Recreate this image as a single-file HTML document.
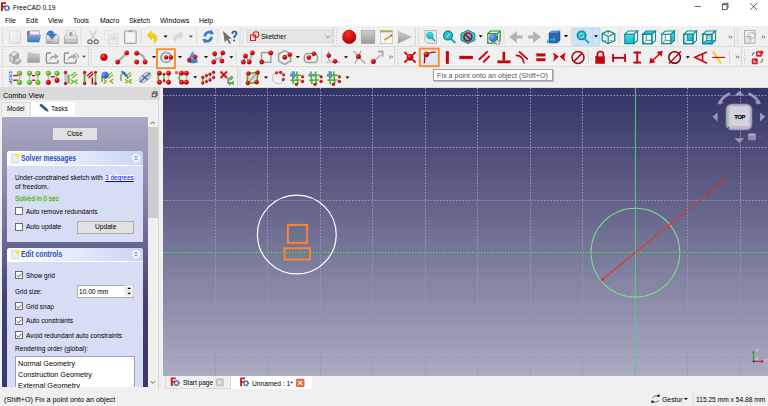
<!DOCTYPE html><html><head><meta charset="utf-8"><style>
html,body{margin:0;padding:0;width:768px;height:406px;overflow:hidden;background:#f0f0f0;position:relative}
.t{position:absolute;font-family:"Liberation Sans",sans-serif;line-height:1;white-space:nowrap;transform-origin:0 0}
.b{position:absolute}
</style></head><body>
<div class="b" style="left:0px;top:0px;width:768px;height:26px;background:#fff"></div>
<div class="b" style="left:0px;top:26px;width:768px;height:62px;background:#f0f0f0"></div>
<div class="b" style="left:0px;top:46px;width:768px;height:1px;background:#dcdcdc"></div>
<div class="b" style="left:0px;top:66px;width:768px;height:1px;background:#dcdcdc"></div>
<div class="b" style="left:0px;top:87px;width:768px;height:1px;background:#dcdcdc"></div>
<svg class="b" style="left:0;top:0" width="768" height="88" viewBox="0 0 768 88"><defs>
<radialGradient id="rg" cx="0.35" cy="0.3" r="0.75"><stop offset="0" stop-color="#ff6060"/><stop offset="0.5" stop-color="#e00000"/><stop offset="1" stop-color="#a00000"/></radialGradient>
<radialGradient id="gg" cx="0.35" cy="0.3" r="0.75"><stop offset="0" stop-color="#a8f070"/><stop offset="0.6" stop-color="#60c020"/><stop offset="1" stop-color="#3a9010"/></radialGradient>
<radialGradient id="bg" cx="0.35" cy="0.3" r="0.75"><stop offset="0" stop-color="#7ab0f0"/><stop offset="1" stop-color="#1a5fb0"/></radialGradient>
<linearGradient id="gry" x1="0" y1="0" x2="0" y2="1"><stop offset="0" stop-color="#cfcfcf"/><stop offset="1" stop-color="#9c9c9c"/></linearGradient>
<linearGradient id="wht" x1="0" y1="0" x2="1" y2="1"><stop offset="0" stop-color="#fafafa"/><stop offset="1" stop-color="#e2e2e2"/></linearGradient>
<linearGradient id="blu" x1="0" y1="0" x2="0" y2="1"><stop offset="0" stop-color="#78a8e0"/><stop offset="1" stop-color="#3c74c0"/></linearGradient>
<linearGradient id="cy" x1="0" y1="0" x2="0" y2="1"><stop offset="0" stop-color="#40e0e8"/><stop offset="1" stop-color="#10b8c8"/></linearGradient>
</defs><line x1="240" y1="27" x2="240" y2="46" stroke="#d6d6d6" stroke-width="1" /><line x1="333.6" y1="27" x2="333.6" y2="46" stroke="#d6d6d6" stroke-width="1" /><line x1="415.3" y1="27" x2="415.3" y2="46" stroke="#d6d6d6" stroke-width="1" /><line x1="734.5" y1="27" x2="734.5" y2="46" stroke="#d6d6d6" stroke-width="1" /><line x1="88.4" y1="47" x2="88.4" y2="66" stroke="#d6d6d6" stroke-width="1" /><line x1="394.6" y1="47" x2="394.6" y2="66" stroke="#d6d6d6" stroke-width="1" /><line x1="741.4" y1="47" x2="741.4" y2="66" stroke="#d6d6d6" stroke-width="1" /><line x1="237.6" y1="67" x2="237.6" y2="87" stroke="#d6d6d6" stroke-width="1" /><line x1="2.5" y1="29" x2="2.5" y2="44.5" stroke="#a8a8a8" stroke-width="0.8" stroke-dasharray="0.9 1.9"/><line x1="243" y1="29" x2="243" y2="44.5" stroke="#a8a8a8" stroke-width="0.8" stroke-dasharray="0.9 1.9"/><line x1="336.75" y1="29" x2="336.75" y2="44.5" stroke="#a8a8a8" stroke-width="0.8" stroke-dasharray="0.9 1.9"/><line x1="418.4" y1="29" x2="418.4" y2="44.5" stroke="#a8a8a8" stroke-width="0.8" stroke-dasharray="0.9 1.9"/><line x1="737.6" y1="29" x2="737.6" y2="44.5" stroke="#a8a8a8" stroke-width="0.8" stroke-dasharray="0.9 1.9"/><line x1="2.5" y1="49.5" x2="2.5" y2="64.5" stroke="#a8a8a8" stroke-width="0.8" stroke-dasharray="0.9 1.9"/><line x1="91" y1="49.5" x2="91" y2="64.5" stroke="#a8a8a8" stroke-width="0.8" stroke-dasharray="0.9 1.9"/><line x1="397.75" y1="49.5" x2="397.75" y2="64.5" stroke="#a8a8a8" stroke-width="0.8" stroke-dasharray="0.9 1.9"/><line x1="744.5" y1="49.5" x2="744.5" y2="64.5" stroke="#a8a8a8" stroke-width="0.8" stroke-dasharray="0.9 1.9"/><line x1="2.5" y1="70" x2="2.5" y2="85.5" stroke="#a8a8a8" stroke-width="0.8" stroke-dasharray="0.9 1.9"/><line x1="240" y1="70" x2="240" y2="85.5" stroke="#a8a8a8" stroke-width="0.8" stroke-dasharray="0.9 1.9"/><line x1="81" y1="29" x2="81" y2="44" stroke="#d4d4d4" stroke-width="0.8" /><line x1="141" y1="29" x2="141" y2="44" stroke="#d4d4d4" stroke-width="0.8" /><line x1="196.75" y1="29" x2="196.75" y2="44" stroke="#d4d4d4" stroke-width="0.8" /><line x1="218" y1="29" x2="218" y2="44" stroke="#d4d4d4" stroke-width="0.8" /><line x1="504" y1="29" x2="504" y2="44" stroke="#d4d4d4" stroke-width="0.8" /><line x1="571.4" y1="29" x2="571.4" y2="44" stroke="#d4d4d4" stroke-width="0.8" /><line x1="619" y1="29" x2="619" y2="44" stroke="#d4d4d4" stroke-width="0.8" /><line x1="677.6" y1="29" x2="677.6" y2="44" stroke="#d4d4d4" stroke-width="0.8" /><line x1="236.4" y1="50" x2="236.4" y2="64" stroke="#d4d4d4" stroke-width="0.8" /><line x1="321.8" y1="50" x2="321.8" y2="64" stroke="#d4d4d4" stroke-width="0.8" /><line x1="588.5" y1="50" x2="588.5" y2="64" stroke="#d4d4d4" stroke-width="0.8" /><line x1="729.5" y1="50" x2="729.5" y2="64" stroke="#d4d4d4" stroke-width="0.8" /><rect x="9.6" y="30.8" width="10.9" height="12.6" fill="url(#wht)" stroke="#cfcfcf" stroke-width="0.7" rx="1"/><rect x="17.6" y="31.4" width="2.4" height="2.4" fill="#fff" stroke="#d8d8d8" stroke-width="0.5" /><path d="M27.2 31 L30 31 L30 30.6 L39.6 30.6 L39.6 35 L27.2 35 Z" fill="#8c8c8c" stroke="none" stroke-width="1" /><rect x="30" y="31.2" width="9" height="3.4" fill="#f4f4f4" stroke="none" stroke-width="0" /><path d="M27.2 31 L29 31 L29 42 L27.2 42 Z" fill="#7a7a7a" stroke="none" stroke-width="1" /><polygon points="28.2,35 41,35 39.3,42.2 28,42.2" fill="url(#blu)" stroke="none" stroke-width="0" /><linearGradient id="tray" x1="0" y1="0" x2="0" y2="1"><stop offset="0" stop-color="#eeeeee"/><stop offset="0.6" stop-color="#d6d6d6"/><stop offset="1" stop-color="#b0b0b0"/></linearGradient><path d="M46.2 36.6 L47.8 34.4 L57.2 34.4 L58.8 36.6 L58.8 43.4 L46.2 43.4 Z" fill="url(#tray)" stroke="#979797" stroke-width="0.7" /><rect x="47" y="39.2" width="11" height="1" fill="#c4c4c4" stroke="none" stroke-width="0" /><rect x="47.4" y="41.4" width="4" height="0.8" fill="#8a8a8a" stroke="none" stroke-width="0" /><path d="M46.6 35 C46.8 31 50.6 29.6 53.6 32 L53.6 34 L56.4 34 L52 39.2 L47.6 34 L50.6 34 C50 32.8 48.2 32.8 46.6 35 Z" fill="#3a78c8" stroke="#2a5aa0" stroke-width="0.3" /><path d="M64.4 36.6 L66 34.4 L75.6 34.4 L77.2 36.6 L77.2 43.4 L64.4 43.4 Z" fill="url(#tray)" stroke="#979797" stroke-width="0.7" /><rect x="65.2" y="39.2" width="11.2" height="1" fill="#c4c4c4" stroke="none" stroke-width="0" /><rect x="66.6" y="30.8" width="8.8" height="5" fill="#f2f2f2" stroke="#b4b4b4" stroke-width="0.5" /><polygon points="69.6,32 72.2,32 72.2,33.6 73.6,33.6 70.9,36.4 68.2,33.6 69.6,33.6" fill="#a4a4a4" stroke="none" stroke-width="0" /><line x1="89.5" y1="30.5" x2="95.5" y2="40" stroke="#c8c8c8" stroke-width="1.3" /><line x1="96.5" y1="30.5" x2="90.5" y2="40" stroke="#c8c8c8" stroke-width="1.3" /><ellipse cx="90" cy="41.8" rx="2.2" ry="1.9" fill="none" stroke="#6e6e6e" stroke-width="1.2"/><ellipse cx="96.2" cy="41.8" rx="2.2" ry="1.9" fill="none" stroke="#6e6e6e" stroke-width="1.2"/><rect x="104.5" y="30.5" width="9" height="9.5" fill="#f2f2f2" stroke="#dadada" stroke-width="0.6" /><rect x="108.5" y="34" width="9.5" height="10" fill="#ececec" stroke="#d6d6d6" stroke-width="0.7" /><rect x="110.5" y="36" width="5.5" height="4" fill="#dedede" stroke="none" stroke-width="0" /><rect x="124.6" y="31" width="11.6" height="12.4" fill="#ececec" stroke="#a6a6a6" stroke-width="1.1" rx="0.6"/><rect x="128.5" y="30.2" width="3.8" height="1.8" fill="#a0a0a0" stroke="none" stroke-width="0" /><rect x="126.2" y="33" width="8.4" height="9" fill="#f6f6f6" stroke="none" stroke-width="0" /><path d="M147 35.5 L151.5 31 L151.5 33.4 C155.5 33.5 157.6 36.5 156.8 40 C156.3 41.6 155 42.6 153.8 42.8 C155 40.5 154.2 37.6 151.5 37.6 L151.5 40 Z" fill="#f0d010" stroke="#d8b800" stroke-width="0.4" /><polygon points="163.6,35.5 167.6,35.5 165.6,37.8" fill="#000" stroke="none" stroke-width="0" /><path d="M183.5 35.5 L179 31 L179 33.4 C175 33.5 172.9 36.5 173.7 40 C174.2 41.6 175.5 42.6 176.7 42.8 C175.5 40.5 176.3 37.6 179 37.6 L179 40 Z" fill="#d8d8d8" stroke="none" stroke-width="1" /><polygon points="188.9,35.4 192.9,35.4 190.9,37.699999999999996" fill="#555" stroke="none" stroke-width="0" /><path d="M203.5 36.5 C203.5 32.5 207 30.2 210.5 30.8 L211.5 29.8 L214 34 L209.5 34.6 L210.3 33.4 C208 33 206.2 34.6 206.3 36.5 Z" fill="#3a78c8" stroke="none" stroke-width="1" /><path d="M212.8 36.8 C212.8 40.8 209.3 43.1 205.8 42.5 L204.8 43.5 L202.3 39.3 L206.8 38.7 L206 39.9 C208.3 40.3 210.1 38.7 210 36.8 Z" fill="#3a78c8" stroke="none" stroke-width="1" /><polygon points="223,31 231.6,38.4 228.5,39 231,43.2 229.4,44 227,39.8 224.8,42.4" fill="#6e6e6e" stroke="none" stroke-width="0" /><path d="M231.4 34 C231.4 31.5 233.2 30.6 234.6 30.6 C236.2 30.6 237.4 31.8 237.4 33.4 C237.4 35.4 235.2 36 235 38 L233.2 38 C233.2 35.4 235.4 35 235.4 33.6 C235.4 32.6 235 32.2 234.5 32.2 C233.8 32.2 233.3 32.8 233.3 34 Z" fill="#2e5fa8" stroke="none" stroke-width="1" /><rect x="233.2" y="39.6" width="1.8" height="1.8" fill="#2e5fa8" stroke="none" stroke-width="0" /><rect x="247" y="30" width="86" height="12.6" fill="#e5e5e5" stroke="#d2d2d2" stroke-width="0.8" /><path d="M250.5 35 L255.5 35 L255.5 40.5 L250.5 40.5 Z" fill="none" stroke="#d82020" stroke-width="1.1" /><circle cx="256" cy="34.6" r="2.8" fill="none" stroke="#d82020" stroke-width="1.1"/><path d="M325.6 35.6 L327.8 37.8 L330 35.6" fill="none" stroke="#606060" stroke-width="0.7" /><radialGradient id="rg2" cx="0.4" cy="0.3" r="0.8"><stop offset="0" stop-color="#f03030"/><stop offset="0.6" stop-color="#d00a0a"/><stop offset="1" stop-color="#980000"/></radialGradient><circle cx="349.2" cy="36.9" r="6.8" fill="url(#rg2)" stroke="#a00000" stroke-width="0.4"/><rect x="361.2" y="30.3" width="13.6" height="13.3" fill="url(#gry)" stroke="#8e8e8e" stroke-width="0.5" /><rect x="380.4" y="30.5" width="12" height="12.8" fill="#f4f4f4" stroke="#b8b8b8" stroke-width="0.6" /><rect x="380.4" y="30.5" width="12" height="1.8" fill="#b8a83a" stroke="none" stroke-width="0" /><line x1="384.3" y1="40" x2="391.3" y2="35.5" stroke="#d09a30" stroke-width="1.6" /><line x1="391" y1="35.6" x2="392.2" y2="34.8" stroke="#e02020" stroke-width="1.6" /><polygon points="398,30.6 412,37 398,43.4" fill="url(#gry)" stroke="none" stroke-width="0" /><path d="M425 30.6 L436.4 30.6 L436.4 43.4 L427 43.4 L425 41.4 Z" fill="#f2f2f2" stroke="#9a9a9a" stroke-width="0.7" /><rect x="427" y="39" width="9" height="3.8" fill="#e4e4e4" stroke="none" stroke-width="0" /><circle cx="430" cy="35.6" r="3.4" fill="url(#cy)" stroke="#108a98" stroke-width="0.5"/><line x1="432" y1="38" x2="435" y2="41" stroke="#10a0b0" stroke-width="1.6" /><circle cx="448" cy="35.6" r="4.4" fill="#20c0cc" stroke="#10808c" stroke-width="1.2"/><line x1="451.2" y1="39" x2="455.4" y2="43" stroke="#10a8b8" stroke-width="1.8" /><line x1="446" y1="37.8" x2="450" y2="33.6" stroke="#ffffff" stroke-width="0.8" /><polygon points="467.9,30.2 474.8,33.6 474.8,40.2 467.9,43.6 461,40.2 461,33.6" fill="url(#cy)" stroke="#0c8088" stroke-width="1" /><circle cx="467.9" cy="36.9" r="3.9" fill="none" stroke="#c00010" stroke-width="1.6"/><line x1="465.2" y1="34.2" x2="470.6" y2="39.6" stroke="#c00010" stroke-width="1.6" /><polygon points="478.7,35.2 482.7,35.2 480.7,37.5" fill="#000" stroke="none" stroke-width="0" /><polygon points="487.8,33.6 490.6,31 500.2,31 500.2,40.6 497.4,43.2 487.8,43.2" fill="none" stroke="#1e9a1e" stroke-width="1.2" /><line x1="487.8" y1="33.6" x2="497.4" y2="33.6" stroke="#1e9a1e" stroke-width="1.1" /><line x1="497.4" y1="33.6" x2="500.2" y2="31" stroke="#1e9a1e" stroke-width="1.1" /><line x1="497.4" y1="33.6" x2="497.4" y2="43.2" stroke="#1e9a1e" stroke-width="1.1" /><circle cx="493.2" cy="37.8" r="4.3" fill="url(#bg)"/><polygon points="495.8,39.4 500.6,43 498.6,43.4 500,45 499,45.4 497.6,43.8 496.4,45" fill="#f4f4f4" stroke="#666" stroke-width="0.4" /><polygon points="509,37 517,31 517,35.4 522.7,35.4 522.7,38.6 517,38.6 517,43" fill="#b4b4b4" stroke="none" stroke-width="0" /><polygon points="541,37 533,31 533,35.4 528,35.4 528,38.6 533,38.6 533,43" fill="#b4b4b4" stroke="none" stroke-width="0" /><polygon points="549,33 552,31 560,31 560,40.5 557,43 549,43" fill="#2e64b0" stroke="#1c4c90" stroke-width="0.5" /><polygon points="549,33 552,31 560,31 557,33" fill="#5a90d8" stroke="none" stroke-width="0" /><path d="M546.5 42.8 C546.8 39.5 549 38.2 553 38.4 L553 36.6 L556 39.4 L553 42 L553 40.4 C550 40.2 548.5 41 547.6 43.6 Z" fill="#18b0c0" stroke="none" stroke-width="1" /><polygon points="564,35.1 568,35.1 566,37.4" fill="#000" stroke="none" stroke-width="0" /><rect x="573" y="28.2" width="26.8" height="17.2" fill="#cce4f7" stroke="#a8d2f4" stroke-width="0.6" /><line x1="592.6" y1="28.6" x2="592.6" y2="45" stroke="#b2d6f2" stroke-width="0.8" /><circle cx="581.6" cy="35.4" r="4.4" fill="#20b8c4" stroke="#108090" stroke-width="1.1"/><line x1="584.6" y1="38.6" x2="589" y2="43" stroke="#10a8b8" stroke-width="1.8" /><path d="M579.6 35.4 A2 2 0 0 1 583.4 34.4 M583.6 35.6 A2 2 0 0 1 579.8 36.6" fill="none" stroke="#e0f4f4" stroke-width="0.8" /><polygon points="594,35.2 598,35.2 596,37.5" fill="#000" stroke="none" stroke-width="0" /><polygon points="602.2,33.6 608.2,30.6 614.7,33.6 614.7,40.6 608.2,43.6 602.2,40.6" fill="none" stroke="#128a90" stroke-width="1.3" /><line x1="602.2" y1="33.6" x2="608.2" y2="36.6" stroke="#128a90" stroke-width="1.1" /><line x1="614.7" y1="33.6" x2="608.2" y2="36.6" stroke="#128a90" stroke-width="1.1" /><line x1="608.2" y1="36.6" x2="608.2" y2="43.6" stroke="#128a90" stroke-width="1.1" /><line x1="608.2" y1="30.6" x2="608.2" y2="33.6" stroke="#128a90" stroke-width="0.8" /><line x1="604.7" y1="40.6" x2="606.2" y2="40.6" stroke="#128a90" stroke-width="1" /><line x1="610.2" y1="40.6" x2="611.7" y2="40.6" stroke="#128a90" stroke-width="1" /><polygon points="624.8,34.2 628.3,31.0 637.5,31.0 634,34.2" fill="#f6f6f6" stroke="#128a90" stroke-width="1.1" /><polygon points="634,34.2 637.5,31.0 637.5,40.400000000000006 634,43.6" fill="#f6f6f6" stroke="#128a90" stroke-width="1.1" /><polygon points="624.8,34.2 634,34.2 634,43.6 624.8,43.6" fill="url(#cy)" stroke="#128a90" stroke-width="1.1" /><polygon points="642.8,34.2 652,34.2 652,43.6 642.8,43.6" fill="#f6f6f6" stroke="#128a90" stroke-width="1.1" /><line x1="646.3" y1="31.0" x2="646.3" y2="40.400000000000006" stroke="#128a90" stroke-width="0.8" /><line x1="646.3" y1="40.400000000000006" x2="655.5" y2="40.400000000000006" stroke="#128a90" stroke-width="0.8" /><line x1="642.8" y1="43.6" x2="646.3" y2="40.400000000000006" stroke="#128a90" stroke-width="0.8" /><polygon points="642.8,34.2 646.3,31.0 655.5,31.0 652,34.2" fill="url(#cy)" stroke="#128a90" stroke-width="1.1" /><polygon points="652,34.2 655.5,31.0 655.5,40.400000000000006 652,43.6" fill="#f6f6f6" stroke="#128a90" stroke-width="1.1" /><polygon points="642.8,34.2 652,34.2 652,43.6 642.8,43.6" fill="none" stroke="#128a90" stroke-width="1.1" /><polygon points="661.8,34.2 671,34.2 671,43.6 661.8,43.6" fill="#f6f6f6" stroke="#128a90" stroke-width="1.1" /><line x1="665.3" y1="31.0" x2="665.3" y2="40.400000000000006" stroke="#128a90" stroke-width="0.8" /><line x1="665.3" y1="40.400000000000006" x2="674.5" y2="40.400000000000006" stroke="#128a90" stroke-width="0.8" /><line x1="661.8" y1="43.6" x2="665.3" y2="40.400000000000006" stroke="#128a90" stroke-width="0.8" /><polygon points="661.8,34.2 665.3,31.0 674.5,31.0 671,34.2" fill="#f6f6f6" stroke="#128a90" stroke-width="1.1" /><polygon points="671,34.2 674.5,31.0 674.5,40.400000000000006 671,43.6" fill="url(#cy)" stroke="#128a90" stroke-width="1.1" /><polygon points="683.8,34.2 693,34.2 693,43.6 683.8,43.6" fill="#f6f6f6" stroke="#128a90" stroke-width="1.1" /><line x1="687.3" y1="31.0" x2="687.3" y2="40.400000000000006" stroke="#128a90" stroke-width="0.8" /><line x1="687.3" y1="40.400000000000006" x2="696.5" y2="40.400000000000006" stroke="#128a90" stroke-width="0.8" /><line x1="683.8" y1="43.6" x2="687.3" y2="40.400000000000006" stroke="#128a90" stroke-width="0.8" /><polygon points="683.8,34.2 687.3,31.0 696.5,31.0 693,34.2" fill="#f6f6f6" stroke="#128a90" stroke-width="1.1" /><polygon points="693,34.2 696.5,31.0 696.5,40.400000000000006 693,43.6" fill="#f6f6f6" stroke="#128a90" stroke-width="1.1" /><rect x="687.3" y="34.2" width="5.7" height="6.2" fill="url(#cy)" stroke="#128a90" stroke-width="0.7" /><polygon points="683.8,34.2 693,34.2 693,43.6 683.8,43.6" fill="none" stroke="#128a90" stroke-width="1.1" /><polygon points="702.8,34.2 712,34.2 712,43.6 702.8,43.6" fill="#f6f6f6" stroke="#128a90" stroke-width="1.1" /><line x1="706.3" y1="31.0" x2="706.3" y2="40.400000000000006" stroke="#128a90" stroke-width="0.8" /><line x1="706.3" y1="40.400000000000006" x2="715.5" y2="40.400000000000006" stroke="#128a90" stroke-width="0.8" /><line x1="702.8" y1="43.6" x2="706.3" y2="40.400000000000006" stroke="#128a90" stroke-width="0.8" /><polygon points="702.8,34.2 706.3,31.0 715.5,31.0 712,34.2" fill="#f6f6f6" stroke="#128a90" stroke-width="1.1" /><polygon points="712,34.2 715.5,31.0 715.5,40.400000000000006 712,43.6" fill="#f6f6f6" stroke="#128a90" stroke-width="1.1" /><polygon points="702.8,43.6 706.3,40.400000000000006 715.5,40.400000000000006 712,43.6" fill="url(#cy)" stroke="#128a90" stroke-width="0.9" /><rect x="707.4" y="35.6" width="2.6" height="2.6" fill="#f6f6f6" stroke="#128a90" stroke-width="0.6" /><polygon points="702.8,34.2 712,34.2 712,43.6 702.8,43.6" fill="none" stroke="#128a90" stroke-width="1.1" /><path d="M728.9 35.7 L730.2 37.0 L728.9 38.3 M730.9 35.7 L732.2 37.0 L730.9 38.3" fill="none" stroke="#444" stroke-width="0.7"/><rect x="744.5" y="30.6" width="10.6" height="12.6" fill="#f0f0f0" stroke="#a0a0a0" stroke-width="0.8" /><rect x="744.5" y="36.5" width="6.5" height="6.7" fill="#e0e0e0" stroke="#a8a8a8" stroke-width="0.6" /><circle cx="751.6" cy="35.6" r="3.3" fill="none" stroke="#a0a0a0" stroke-width="0.8"/><path d="M761.9 35.7 L763.2 37.0 L761.9 38.3 M763.9 35.7 L765.2 37.0 L763.9 38.3" fill="none" stroke="#444" stroke-width="0.7"/><polygon points="9.8,54.6 14.4,51.4 18.4,53.8 13.8,57" fill="#e4e4e4" stroke="#8c8c8c" stroke-width="0.7" /><polygon points="9.8,54.6 13.8,57 13.8,63.6 9.8,61.2" fill="#cfcfcf" stroke="#8c8c8c" stroke-width="0.7" /><polygon points="13.8,57 18.4,53.8 18.4,57.4 13.8,60.6" fill="#b4b4b4" stroke="#8c8c8c" stroke-width="0.7" /><polygon points="13.8,60.6 17.4,58.2 20.8,60.2 17.2,62.6" fill="#e4e4e4" stroke="#8c8c8c" stroke-width="0.7" /><polygon points="13.8,60.6 17.2,62.6 17.2,64.2 13.8,63.6" fill="#cfcfcf" stroke="#8c8c8c" stroke-width="0.6" /><polygon points="17.2,62.6 20.8,60.2 20.8,61.8 17.2,64.2" fill="#b4b4b4" stroke="#8c8c8c" stroke-width="0.6" /><line x1="10.4" y1="57.6" x2="13.4" y2="59.4" stroke="#f4f4f4" stroke-width="0.6" /><path d="M27.4 52.2 L32 52.2 L33.4 53.6 L39.8 53.6 L39.8 62.8 L27.4 62.8 Z" fill="url(#gry)" stroke="none" stroke-width="1" /><path d="M51 53 L47.5 53 Q46.4 53 46.4 54 L46.4 62 Q46.4 63.2 47.5 63.2 L57 63.2 Q58 63.2 58 62 L58 60" fill="none" stroke="#8a8a8a" stroke-width="1.3" /><path d="M49.5 61 C49.5 57 51.5 55.5 55 55.5 L55 53.4 L58.8 56.6 L55 59.6 L55 57.6 C52.6 57.6 50.6 58.6 49.5 61 Z" fill="#a8a8a8" stroke="none" stroke-width="1" /><path d="M69 53 L65.5 53 Q64.4 53 64.4 54 L64.4 62 Q64.4 63.2 65.5 63.2 L75 63.2 Q76 63.2 76 62 L76 60" fill="none" stroke="#8a8a8a" stroke-width="1.3" /><path d="M67.5 61 C67.5 57 69.5 55.5 73 55.5 L73 53.4 L76.8 56.6 L73 59.6 L73 57.6 C70.6 57.6 68.6 58.6 67.5 61 Z" fill="#a8a8a8" stroke="none" stroke-width="1" /><path d="M75.5 53 L78.6 56.6 L75.5 60" fill="none" stroke="#a8a8a8" stroke-width="1.1" /><polygon points="82,55.8 86,55.8 84,58.099999999999994" fill="#555" stroke="none" stroke-width="0" /><circle cx="103.9" cy="57.25" r="3.4" fill="url(#rg)" stroke="#a00000" stroke-width="0.4"/><line x1="117.7" y1="62" x2="126.75" y2="52.9" stroke="#9a9a9a" stroke-width="1.9" /><line x1="117.7" y1="62" x2="126.75" y2="52.9" stroke="#e8e8e8" stroke-width="0.855" stroke-dasharray="0.6 0.6"/><circle cx="117.7" cy="62" r="2.2" fill="url(#rg)" stroke="#a00000" stroke-width="0.4"/><circle cx="126.75" cy="52.9" r="2.2" fill="url(#rg)" stroke="#a00000" stroke-width="0.4"/><path d="M137 53.2 Q144.6 54 145.1 62" fill="none" stroke="#9a9a9a" stroke-width="1.9" /><path d="M137 53.2 Q144.6 54 145.1 62" fill="none" stroke="#e8e8e8" stroke-width="0.6" stroke-dasharray="0.6 0.6"/><circle cx="136.7" cy="53.2" r="2.2" fill="url(#rg)" stroke="#a00000" stroke-width="0.4"/><circle cx="136.7" cy="62" r="2.2" fill="url(#rg)" stroke="#a00000" stroke-width="0.4"/><circle cx="145.1" cy="62" r="2.2" fill="url(#rg)" stroke="#a00000" stroke-width="0.4"/><polygon points="152,56 156,56 154,58.3" fill="#000" stroke="none" stroke-width="0" /><rect x="156.9" y="49.2" width="18" height="18.9" fill="#e8f2fa" stroke="#ff8a24" stroke-width="1.9" /><circle cx="166" cy="57.4" r="4.9" fill="none" stroke="#989898" stroke-width="2"/><circle cx="166" cy="57.4" r="4.9" fill="none" stroke="#e6e6e6" stroke-width="0.6" stroke-dasharray="0.6 0.6"/><circle cx="166.2" cy="57.4" r="2" fill="url(#rg)" stroke="#a00000" stroke-width="0.4"/><circle cx="171" cy="57.4" r="2" fill="url(#rg)" stroke="#a00000" stroke-width="0.4"/><polygon points="178,56 182,56 180,58.3" fill="#000" stroke="none" stroke-width="0" /><path d="M192.6 51 C191 53 187.8 60 187.6 62.2 Q192.5 64.4 197.8 62.2 C197 59 194.5 53 192.6 51 Z" fill="url(#blu)" stroke="none" stroke-width="1" /><line x1="189.2" y1="59.8" x2="195.4" y2="56.8" stroke="#c8c8c8" stroke-width="0.8" /><circle cx="189.2" cy="59.8" r="1.9" fill="url(#rg)" stroke="#a00000" stroke-width="0.4"/><circle cx="195.4" cy="56.8" r="1.9" fill="url(#rg)" stroke="#a00000" stroke-width="0.4"/><polygon points="204,56 208,56 206,58.3" fill="#000" stroke="none" stroke-width="0" /><line x1="214.7" y1="53.8" x2="216" y2="58.5" stroke="#9a9a9a" stroke-width="1.2" /><line x1="214.7" y1="53.8" x2="216" y2="58.5" stroke="#e8e8e8" stroke-width="0.54" stroke-dasharray="0.6 0.6"/><path d="M214 60.5 L221 57.5 L222.8 52.9" fill="none" stroke="#9a9a9a" stroke-width="1.2" /><circle cx="214.7" cy="53.8" r="2.2" fill="url(#rg)" stroke="#a00000" stroke-width="0.4"/><circle cx="222.8" cy="52.9" r="2.2" fill="url(#rg)" stroke="#a00000" stroke-width="0.4"/><circle cx="213.75" cy="62" r="2.2" fill="url(#rg)" stroke="#a00000" stroke-width="0.4"/><circle cx="221.9" cy="61" r="2.2" fill="url(#rg)" stroke="#a00000" stroke-width="0.4"/><polygon points="229.3,56.3 233.3,56.3 231.3,58.599999999999994" fill="#000" stroke="none" stroke-width="0" /><path d="M243.3 62 L245.5 56 L249.25 62 L252.4 52.9" fill="none" stroke="#9a9a9a" stroke-width="1.3" /><circle cx="252.4" cy="52.9" r="2.2" fill="url(#rg)" stroke="#a00000" stroke-width="0.4"/><circle cx="245.5" cy="56" r="2.2" fill="url(#rg)" stroke="#a00000" stroke-width="0.4"/><circle cx="243.3" cy="62" r="2.2" fill="url(#rg)" stroke="#a00000" stroke-width="0.4"/><circle cx="249.25" cy="62" r="2.2" fill="url(#rg)" stroke="#a00000" stroke-width="0.4"/><rect x="261.5" y="52.6" width="9.4" height="9.6" fill="none" stroke="#9a9a9a" stroke-width="1.4" /><circle cx="270.8" cy="52.9" r="2.2" fill="url(#rg)" stroke="#a00000" stroke-width="0.4"/><circle cx="261.75" cy="62" r="2.2" fill="url(#rg)" stroke="#a00000" stroke-width="0.4"/><polygon points="284.6,50.6 290.6,54 290.6,61 284.6,64.5 278.6,61 278.6,54" fill="none" stroke="#a0a0a0" stroke-width="1.5" /><circle cx="284.8" cy="57.3" r="2.2" fill="url(#rg)" stroke="#a00000" stroke-width="0.4"/><circle cx="289.8" cy="54.75" r="2.1" fill="url(#rg)" stroke="#a00000" stroke-width="0.4"/><polygon points="295.8,56 299.8,56 297.8,58.3" fill="#000" stroke="none" stroke-width="0" /><rect x="304.3" y="53.4" width="13.2" height="9" fill="none" stroke="#a0a0a0" stroke-width="1.5" rx="3.5"/><circle cx="308.9" cy="57.6" r="2.1" fill="url(#rg)" stroke="#a00000" stroke-width="0.4"/><circle cx="313.9" cy="53.8" r="2.1" fill="url(#rg)" stroke="#a00000" stroke-width="0.4"/><path d="M328.5 51 L328.5 58 Q328.5 62 333 62 L340 62" fill="none" stroke="#a8a8a8" stroke-width="1.2" /><line x1="326.6" y1="62.5" x2="328.5" y2="62.5" stroke="#a0a0a0" stroke-width="1" /><circle cx="328.75" cy="55.6" r="2.1" fill="url(#rg)" stroke="#a00000" stroke-width="0.4"/><circle cx="335" cy="61.3" r="2.1" fill="url(#rg)" stroke="#a00000" stroke-width="0.4"/><polygon points="344,56.3 348,56.3 346,58.599999999999994" fill="#000" stroke="none" stroke-width="0" /><line x1="353.5" y1="51" x2="365" y2="63.5" stroke="#9a9a9a" stroke-width="1.3" /><line x1="353.5" y1="51" x2="365" y2="63.5" stroke="#e8e8e8" stroke-width="0.5850000000000001" stroke-dasharray="0.6 0.6"/><line x1="361" y1="51" x2="355" y2="63.5" stroke="#9a9a9a" stroke-width="1.3" /><line x1="361" y1="51" x2="355" y2="63.5" stroke="#e8e8e8" stroke-width="0.5850000000000001" stroke-dasharray="0.6 0.6"/><circle cx="358.5" cy="56.6" r="2.3" fill="url(#rg)" stroke="#a00000" stroke-width="0.4"/><line x1="373.4" y1="61.6" x2="380.5" y2="55" stroke="#9a9a9a" stroke-width="1.1" /><line x1="373.4" y1="61.6" x2="380.5" y2="55" stroke="#e8e8e8" stroke-width="0.49500000000000005" stroke-dasharray="0.6 0.6"/><path d="M378.2 51.5 L382.6 51.5 L382.6 56.6" fill="none" stroke="#a8a8a8" stroke-width="1.8" /><circle cx="373.4" cy="61.6" r="2.3" fill="url(#rg)" stroke="#a00000" stroke-width="0.4"/><path d="M389.3 55.7 L390.6 57.0 L389.3 58.3 M391.3 55.7 L392.6 57.0 L391.3 58.3" fill="none" stroke="#444" stroke-width="0.7"/><line x1="404.5" y1="52" x2="407.3" y2="54.8" stroke="#d00000" stroke-width="1.8" /><line x1="412.7" y1="54.8" x2="415.5" y2="52" stroke="#d00000" stroke-width="1.8" /><line x1="404.5" y1="62.5" x2="407.3" y2="59.7" stroke="#d00000" stroke-width="1.8" /><line x1="412.7" y1="59.7" x2="415.5" y2="62.5" stroke="#d00000" stroke-width="1.8" /><circle cx="410" cy="57.25" r="3.2" fill="url(#rg)" stroke="#a00000" stroke-width="0.4"/><rect x="419.8" y="48.6" width="19" height="17.6" fill="#dce8f5" stroke="#ff8a24" stroke-width="1.9" /><path d="M424.4 63.4 C424.2 59 425 56 426.4 54.6 C428.5 52.6 432 52.1 435.8 52.2" fill="none" stroke="#b00010" stroke-width="1.3" /><circle cx="426.4" cy="54.4" r="2.5" fill="url(#rg)" stroke="#a00000" stroke-width="0.4"/><rect x="446" y="51.2" width="2.8" height="12.6" fill="#d00010" stroke="#a00010" stroke-width="0.3" /><rect x="459.6" y="56" width="13.2" height="2.9" fill="#d00010" stroke="#a00010" stroke-width="0.3" /><line x1="478.8" y1="59.8" x2="487.6" y2="51.4" stroke="#d00010" stroke-width="2" /><line x1="483.2" y1="62.4" x2="489.6" y2="56" stroke="#d00010" stroke-width="2" /><rect x="502.5" y="51.8" width="2.6" height="8.8" fill="#d00010" stroke="none" stroke-width="0" /><rect x="497.4" y="60.4" width="13.2" height="2.8" fill="#d00010" stroke="none" stroke-width="0" /><line x1="519" y1="51.5" x2="527.8" y2="59.4" stroke="#d00010" stroke-width="1.7" /><path d="M515.8 55.4 Q522.5 55 524.2 63.4" fill="none" stroke="#d00010" stroke-width="1.6" /><rect x="536.6" y="53.6" width="8.6" height="2.6" fill="#d00010" stroke="#a00010" stroke-width="0.3" /><rect x="536.6" y="58.4" width="8.6" height="2.6" fill="#d00010" stroke="#a00010" stroke-width="0.3" /><polygon points="553,52.6 558.8,56.6 553,61.8 554.5,57.2" fill="#d00010" stroke="none" stroke-width="0" /><polygon points="565.6,52.6 559.6,56.6 565.6,61.8 564.2,57.2" fill="#d00010" stroke="none" stroke-width="0" /><circle cx="578" cy="57.4" r="6" fill="none" stroke="#b00010" stroke-width="1.5"/><line x1="574" y1="61.4" x2="582" y2="53.4" stroke="#b00010" stroke-width="1.5" /><path d="M597.4 57 L597.4 54.8 C597.4 50.4 603.4 50.4 603.4 54.8 L603.4 57" fill="none" stroke="#c00010" stroke-width="1.7" /><rect x="595.6" y="56.6" width="9.2" height="7" fill="#d00010" stroke="#a00010" stroke-width="0.4" /><rect x="612.2" y="54" width="1.8" height="8" fill="#c00010" stroke="none" stroke-width="0" /><rect x="624.2" y="54" width="1.8" height="8" fill="#c00010" stroke="none" stroke-width="0" /><rect x="612.2" y="56.9" width="13.8" height="1.9" fill="#c00010" stroke="none" stroke-width="0" /><rect x="633.4" y="51.6" width="7.6" height="1.9" fill="#c00010" stroke="none" stroke-width="0" /><rect x="633.4" y="61.6" width="7.6" height="1.9" fill="#c00010" stroke="none" stroke-width="0" /><rect x="636.3" y="51.6" width="1.9" height="11.8" fill="#c00010" stroke="none" stroke-width="0" /><line x1="651.5" y1="61.5" x2="661" y2="52.5" stroke="#d00010" stroke-width="1.6" /><polygon points="649.4,63.6 650.5,57.5 655.5,62.2" fill="#d00010" stroke="none" stroke-width="0" /><polygon points="662.6,50.8 661.5,56.8 656.6,52.1" fill="#d00010" stroke="none" stroke-width="0" /><circle cx="674.6" cy="57.5" r="5.8" fill="none" stroke="#800010" stroke-width="1.5"/><line x1="669" y1="63.5" x2="681" y2="51.5" stroke="#c00010" stroke-width="1.4" /><polygon points="685.8,56.2 689.8,56.2 687.8,58.5" fill="#000" stroke="none" stroke-width="0" /><path d="M707 52 L694.8 57.2 L707 63.2" fill="none" stroke="#d00010" stroke-width="1.6" /><line x1="702.6" y1="54" x2="702.6" y2="61" stroke="#d00010" stroke-width="1.5" /><line x1="713" y1="51.4" x2="721" y2="63.4" stroke="#e8d010" stroke-width="1.8" /><line x1="712.2" y1="57.4" x2="725.2" y2="57.4" stroke="#c80010" stroke-width="1.1" /><path d="M735.9 55.7 L737.2 57.0 L735.9 58.3 M737.9 55.7 L739.2 57.0 L737.9 58.3" fill="none" stroke="#444" stroke-width="0.7"/><rect x="756.2" y="51.2" width="5.6" height="5.2" fill="#e02028" stroke="#b01010" stroke-width="0.4" rx="0.8"/><rect x="757.6" y="52.6" width="2.8" height="2.4" fill="#f6d0d0" stroke="none" stroke-width="0" /><rect x="752" y="58.8" width="5.6" height="5.2" fill="#e02028" stroke="#b01010" stroke-width="0.4" rx="0.8"/><rect x="753.4" y="60.2" width="2.8" height="2.4" fill="#f6d0d0" stroke="none" stroke-width="0" /><circle cx="761.6" cy="52.4" r="1.8" fill="#e02028"/><circle cx="755.8" cy="60" r="1.8" fill="#e02028"/><path d="M752.2 55.6 Q752.6 52.8 754.6 52.2" fill="none" stroke="#707070" stroke-width="1.2" /><path d="M762.8 58.8 Q762.4 61.6 760.4 62.2" fill="none" stroke="#707070" stroke-width="1.2" /><text x="0" y="0" font-family="Liberation Sans" font-size="4.4" fill="#3a5ad0" stroke="#3a5ad0" stroke-width="0.15" transform="translate(8.6,71.2) rotate(90) scale(1.45,1)">DOF</text><line x1="19.6" y1="73.5" x2="19.6" y2="82.5" stroke="#bdbdbd" stroke-width="1.6" /><line x1="13.2" y1="75.6" x2="17.7" y2="75.6" stroke="#c00010" stroke-width="1.3" /><line x1="13.2" y1="80.2" x2="17.7" y2="80.2" stroke="#c00010" stroke-width="1.3" /><circle cx="19.6" cy="73.3" r="2.3" fill="url(#gg)" stroke="#3a9010" stroke-width="0.4"/><circle cx="19.6" cy="82.5" r="2.3" fill="url(#gg)" stroke="#3a9010" stroke-width="0.4"/><line x1="29.5" y1="73.5" x2="29.5" y2="82.5" stroke="#bdbdbd" stroke-width="1.6" /><line x1="37.9" y1="73.5" x2="37.9" y2="82.5" stroke="#bdbdbd" stroke-width="1.6" /><line x1="32" y1="75.6" x2="35.4" y2="75.6" stroke="#c00010" stroke-width="1.3" /><line x1="32" y1="80.2" x2="35.4" y2="80.2" stroke="#c00010" stroke-width="1.3" /><circle cx="29.5" cy="73.3" r="2.3" fill="url(#gg)" stroke="#3a9010" stroke-width="0.4"/><circle cx="37.9" cy="73.3" r="2.3" fill="url(#gg)" stroke="#3a9010" stroke-width="0.4"/><circle cx="29.5" cy="82.5" r="2.3" fill="url(#gg)" stroke="#3a9010" stroke-width="0.4"/><circle cx="37.9" cy="82.5" r="2.3" fill="url(#gg)" stroke="#3a9010" stroke-width="0.4"/><line x1="48.4" y1="73.3" x2="48.4" y2="82.4" stroke="#bdbdbd" stroke-width="1.6" /><line x1="57" y1="73.3" x2="57" y2="80.4" stroke="#bdbdbd" stroke-width="1.6" /><line x1="50.8" y1="76.8" x2="55.0" y2="76.8" stroke="#c00010" stroke-width="1.3" /><circle cx="48.4" cy="73.3" r="2.3" fill="url(#gg)" stroke="#3a9010" stroke-width="0.4"/><circle cx="57" cy="73.3" r="2.3" fill="url(#gg)" stroke="#3a9010" stroke-width="0.4"/><circle cx="48.4" cy="82.4" r="2.3" fill="url(#rg)" stroke="#a00000" stroke-width="0.4"/><circle cx="57" cy="80.4" r="2.3" fill="url(#rg)" stroke="#a00000" stroke-width="0.4"/><line x1="65.5" y1="72.5" x2="65.5" y2="83.5" stroke="#c0c0c0" stroke-width="2.4" /><circle cx="65.5" cy="72.5" r="1.4" fill="url(#rg)" stroke="#a00000" stroke-width="0.4"/><circle cx="65.5" cy="83.5" r="1.4" fill="url(#rg)" stroke="#a00000" stroke-width="0.4"/><rect x="67.5" y="74.5" width="2" height="9" fill="#60b030" stroke="none" stroke-width="0" /><line x1="71" y1="76" x2="75.5" y2="72" stroke="#60c030" stroke-width="1.4" /><line x1="72.5" y1="78" x2="77" y2="74" stroke="#60c030" stroke-width="1.4" /><path d="M70.5 79.5 L73.8 81.6 L70.5 84" fill="none" stroke="#60c030" stroke-width="1.4" /><path d="M77.6 79.5 L74.6 81.6 L77.6 84" fill="none" stroke="#60c030" stroke-width="1.4" /><line x1="84.6" y1="72.5" x2="84.6" y2="83.5" stroke="#60b030" stroke-width="2" /><circle cx="84.6" cy="72.5" r="1.4" fill="url(#rg)" stroke="#a00000" stroke-width="0.4"/><circle cx="84.6" cy="83.5" r="1.4" fill="url(#rg)" stroke="#a00000" stroke-width="0.4"/><line x1="87" y1="76" x2="92.5" y2="71.5" stroke="#c00010" stroke-width="1.4" /><line x1="88.5" y1="78" x2="93.5" y2="73.5" stroke="#c00010" stroke-width="1.4" /><line x1="92.4" y1="77.5" x2="92.4" y2="84.5" stroke="#c00010" stroke-width="1.5" /><line x1="95.5" y1="72" x2="95.5" y2="84" stroke="#60b030" stroke-width="1.6" /><circle cx="95.5" cy="72.2" r="1.2" fill="url(#rg)" stroke="#a00000" stroke-width="0.4"/><circle cx="95.5" cy="83.6" r="1.2" fill="url(#rg)" stroke="#a00000" stroke-width="0.4"/><line x1="102" y1="76" x2="102" y2="82" stroke="#70b030" stroke-width="1.6" /><path d="M103.8 79.6 L106.4 81.6 L103.8 83.6" fill="none" stroke="#80c020" stroke-width="1.4" /><line x1="107" y1="76.5" x2="112" y2="72.2" stroke="#90c030" stroke-width="1.4" /><line x1="108.6" y1="78.4" x2="113" y2="74.4" stroke="#90c030" stroke-width="1.4" /><path d="M113.2 79 L110.2 81.2 L113.2 83.4" fill="none" stroke="#80c020" stroke-width="1.4" /><circle cx="105.2" cy="75.2" r="3.3" fill="url(#bg)" stroke="#10407a" stroke-width="0.4"/><line x1="105.2" y1="73.6" x2="105.2" y2="76.8" stroke="#103060" stroke-width="0.7" /><line x1="121" y1="74" x2="121" y2="81" stroke="#70b030" stroke-width="1.5" /><line x1="125.6" y1="76.6" x2="130.6" y2="72.2" stroke="#90c030" stroke-width="1.4" /><line x1="127.2" y1="78.4" x2="131.6" y2="74.4" stroke="#90c030" stroke-width="1.4" /><path d="M125.2 79.4 L128 81.4 L125.2 83.4" fill="none" stroke="#80c020" stroke-width="1.4" /><path d="M131.6 79.4 L129 81.4 L131.6 83.4" fill="none" stroke="#80c020" stroke-width="1.4" /><polygon points="121.5,71.2 124.5,72 126.8,75 127.8,78.4 126,76.6 123.6,74.2 122,73.6" fill="#2a7ad0" stroke="#10407a" stroke-width="0.4" /><ellipse cx="145" cy="77.5" rx="7" ry="3.6" transform="rotate(-40 145 77.5)" fill="#d0d0d0" stroke="#8a8a8a" stroke-width="0.6"/><line x1="140" y1="82" x2="150" y2="73" stroke="#3a6ab8" stroke-width="1.3" /><line x1="142" y1="75.5" x2="148" y2="80" stroke="#3a6ab8" stroke-width="1.3" /><path d="M159 74 Q157 77.5 159 81" fill="none" stroke="#60b030" stroke-width="1.5" /><line x1="168.6" y1="74" x2="168.6" y2="81" stroke="#c0c0c0" stroke-width="1.6" /><line x1="164" y1="74" x2="164" y2="81" stroke="#60b030" stroke-width="1.3" /><circle cx="159.4" cy="73.2" r="2.2" fill="url(#rg)" stroke="#a00000" stroke-width="0.4"/><circle cx="159.4" cy="82.3" r="2.2" fill="url(#rg)" stroke="#a00000" stroke-width="0.4"/><circle cx="168.6" cy="73.2" r="2.2" fill="url(#rg)" stroke="#a00000" stroke-width="0.4"/><circle cx="168.6" cy="82.3" r="2.2" fill="url(#rg)" stroke="#a00000" stroke-width="0.4"/><circle cx="164" cy="74.2" r="1.2" fill="url(#rg)" stroke="#a00000" stroke-width="0.4"/><circle cx="164" cy="80.8" r="1.2" fill="url(#rg)" stroke="#a00000" stroke-width="0.4"/><rect x="175" y="71.2" width="3.2" height="3" fill="#e06060" stroke="none" stroke-width="0" /><path d="M180 74 Q178.4 77.5 180 81" fill="none" stroke="#60b030" stroke-width="1.5" /><line x1="186.6" y1="74" x2="186.6" y2="81" stroke="#c0c0c0" stroke-width="1.6" /><circle cx="181.6" cy="73.2" r="2.2" fill="url(#rg)" stroke="#a00000" stroke-width="0.4"/><circle cx="181.6" cy="82.3" r="2.2" fill="url(#rg)" stroke="#a00000" stroke-width="0.4"/><circle cx="186.4" cy="73.2" r="2.2" fill="url(#rg)" stroke="#a00000" stroke-width="0.4"/><circle cx="186.4" cy="82.3" r="2.2" fill="url(#rg)" stroke="#a00000" stroke-width="0.4"/><polygon points="193.2,76.2 197.2,76.2 195.2,78.5" fill="#000" stroke="none" stroke-width="0" /><line x1="202.8" y1="77.4" x2="202.8" y2="83" stroke="#60b030" stroke-width="1.3" /><line x1="206.4" y1="75.6" x2="206.4" y2="81.6" stroke="#c0c0c0" stroke-width="1.3" /><line x1="210" y1="74.2" x2="210" y2="80" stroke="#c0c0c0" stroke-width="1.3" /><line x1="213.6" y1="72.2" x2="213.6" y2="77.6" stroke="#c0c0c0" stroke-width="1.3" /><circle cx="202.8" cy="77.4" r="1.4" fill="url(#rg)" stroke="#a00000" stroke-width="0.4"/><circle cx="202.8" cy="83" r="1.4" fill="url(#rg)" stroke="#a00000" stroke-width="0.4"/><circle cx="206.4" cy="75.6" r="1.4" fill="url(#rg)" stroke="#a00000" stroke-width="0.4"/><circle cx="206.4" cy="81.6" r="1.4" fill="url(#rg)" stroke="#a00000" stroke-width="0.4"/><circle cx="210" cy="74.2" r="1.4" fill="url(#rg)" stroke="#a00000" stroke-width="0.4"/><circle cx="210" cy="80" r="1.4" fill="url(#rg)" stroke="#a00000" stroke-width="0.4"/><circle cx="213.6" cy="72.2" r="1.4" fill="url(#rg)" stroke="#a00000" stroke-width="0.4"/><circle cx="213.6" cy="77.6" r="1.4" fill="url(#rg)" stroke="#a00000" stroke-width="0.4"/><line x1="220.5" y1="71.5" x2="227" y2="78" stroke="#e01010" stroke-width="2" /><line x1="227" y1="71.5" x2="220.5" y2="78" stroke="#e01010" stroke-width="2" /><line x1="228.6" y1="79" x2="232.5" y2="76" stroke="#309020" stroke-width="1.2" /><line x1="229.6" y1="80.4" x2="233.2" y2="77.6" stroke="#309020" stroke-width="1.2" /><path d="M228.5 82 L231 83.4 L229 85" fill="none" stroke="#309020" stroke-width="1.2" /><path d="M233.8 81.5 L231.8 83 L233.8 84.6" fill="none" stroke="#309020" stroke-width="1.2" /><line x1="228" y1="78" x2="228" y2="84" stroke="#309020" stroke-width="1.2" /><polygon points="247.6,73.4 258,72.4 256.8,82.6 247.2,83.4" fill="#d8d8d8" stroke="#50b020" stroke-width="1.5" /><line x1="248.5" y1="82.4" x2="256.5" y2="73.4" stroke="#909090" stroke-width="1.1" /><circle cx="248.4" cy="73.6" r="2" fill="url(#rg)" stroke="#a00000" stroke-width="0.4"/><circle cx="257.6" cy="72.6" r="2" fill="url(#rg)" stroke="#a00000" stroke-width="0.4"/><circle cx="256.6" cy="82.2" r="2" fill="url(#rg)" stroke="#a00000" stroke-width="0.4"/><circle cx="247.8" cy="83" r="2" fill="url(#rg)" stroke="#a00000" stroke-width="0.4"/><polygon points="264,76.4 268,76.4 266,78.7" fill="#000" stroke="none" stroke-width="0" /><circle cx="278.3" cy="78" r="5.8" fill="none" stroke="#9a9a9a" stroke-width="1" stroke-dasharray="1.4 1.1"/><circle cx="276.6" cy="72.8" r="1.3" fill="url(#rg)" stroke="#a00000" stroke-width="0.4"/><circle cx="280.6" cy="72.4" r="1.3" fill="url(#rg)" stroke="#a00000" stroke-width="0.4"/><circle cx="283.6" cy="74.8" r="1.3" fill="url(#rg)" stroke="#a00000" stroke-width="0.4"/><circle cx="283.2" cy="79.6" r="1.3" fill="url(#rg)" stroke="#a00000" stroke-width="0.4"/><line x1="292.3" y1="71.5" x2="293.3" y2="84" stroke="#50b020" stroke-width="1.6" /><line x1="296.8" y1="71.5" x2="297.8" y2="84" stroke="#50b020" stroke-width="1.6" /><line x1="290" y1="75.5" x2="301" y2="75.2" stroke="#50b020" stroke-width="1.6" /><line x1="290.5" y1="80.2" x2="300.4" y2="80" stroke="#50b020" stroke-width="1.6" /><line x1="298.6" y1="79.8" x2="302" y2="82" stroke="#b8b8b8" stroke-width="0.9" /><circle cx="302.5" cy="76.8" r="1.4" fill="url(#rg)" stroke="#a00000" stroke-width="0.4"/><circle cx="302.5" cy="81.5" r="1.4" fill="url(#rg)" stroke="#a00000" stroke-width="0.4"/><circle cx="296.4" cy="84.3" r="1.4" fill="url(#rg)" stroke="#a00000" stroke-width="0.4"/><rect x="290" y="73.8" width="5.6" height="2.8" fill="#5a94d8" stroke="none" stroke-width="0" /><rect x="292.2" y="71.4" width="2.8" height="6.8" fill="#5a94d8" stroke="none" stroke-width="0" /><line x1="310.90000000000003" y1="71.5" x2="311.90000000000003" y2="84" stroke="#50b020" stroke-width="1.6" /><line x1="315.40000000000003" y1="71.5" x2="316.40000000000003" y2="84" stroke="#50b020" stroke-width="1.6" /><line x1="308.6" y1="75.5" x2="319.6" y2="75.2" stroke="#50b020" stroke-width="1.6" /><line x1="309.1" y1="80.2" x2="319.0" y2="80" stroke="#50b020" stroke-width="1.6" /><line x1="317.20000000000005" y1="79.8" x2="320.6" y2="82" stroke="#b8b8b8" stroke-width="0.9" /><circle cx="321.1" cy="76.8" r="1.4" fill="url(#rg)" stroke="#a00000" stroke-width="0.4"/><circle cx="321.1" cy="81.5" r="1.4" fill="url(#rg)" stroke="#a00000" stroke-width="0.4"/><circle cx="315.0" cy="84.3" r="1.4" fill="url(#rg)" stroke="#a00000" stroke-width="0.4"/><rect x="308.4" y="73.8" width="6.8" height="2.6" fill="#5a94d8" stroke="none" stroke-width="0" /><line x1="329.2" y1="71.5" x2="330.2" y2="84" stroke="#50b020" stroke-width="1.6" /><line x1="333.7" y1="71.5" x2="334.7" y2="84" stroke="#50b020" stroke-width="1.6" /><line x1="326.9" y1="75.5" x2="337.9" y2="75.2" stroke="#50b020" stroke-width="1.6" /><line x1="327.4" y1="80.2" x2="337.29999999999995" y2="80" stroke="#50b020" stroke-width="1.6" /><line x1="335.5" y1="79.8" x2="338.9" y2="82" stroke="#b8b8b8" stroke-width="0.9" /><circle cx="339.4" cy="76.8" r="1.4" fill="url(#rg)" stroke="#a00000" stroke-width="0.4"/><circle cx="339.4" cy="81.5" r="1.4" fill="url(#rg)" stroke="#a00000" stroke-width="0.4"/><circle cx="333.29999999999995" cy="84.3" r="1.4" fill="url(#rg)" stroke="#a00000" stroke-width="0.4"/><rect x="326.9" y="73.8" width="5.6" height="2.8" fill="#5a94d8" stroke="none" stroke-width="0" /><rect x="329.1" y="71.4" width="2.8" height="6.8" fill="#5a94d8" stroke="none" stroke-width="0" /><polygon points="345.4,76.4 349.4,76.4 347.4,78.7" fill="#000" stroke="none" stroke-width="0" /></svg>
<div class="t" style="left:12.50px;top:3.93px;font-size:8.0px;color:#000;transform:scaleX(0.831);">FreeCAD 0.19</div>
<div class="t" style="left:4.75px;top:16.93px;font-size:8.0px;color:#000;transform:scaleX(0.842);">File</div>
<div class="t" style="left:25.60px;top:16.93px;font-size:8.0px;color:#000;transform:scaleX(0.863);">Edit</div>
<div class="t" style="left:47.50px;top:16.93px;font-size:8.0px;color:#000;transform:scaleX(0.871);">View</div>
<div class="t" style="left:73.00px;top:16.93px;font-size:8.0px;color:#000;transform:scaleX(0.857);">Tools</div>
<div class="t" style="left:99.75px;top:16.93px;font-size:8.0px;color:#000;transform:scaleX(0.866);">Macro</div>
<div class="t" style="left:128.75px;top:16.93px;font-size:8.0px;color:#000;transform:scaleX(0.859);">Sketch</div>
<div class="t" style="left:159.75px;top:16.93px;font-size:8.0px;color:#000;transform:scaleX(0.901);">Windows</div>
<div class="t" style="left:198.90px;top:16.93px;font-size:8.0px;color:#000;transform:scaleX(0.857);">Help</div>
<div class="b" style="left:0px;top:88px;width:160px;height:12px;background:#dadada"></div>
<div class="t" style="left:2.75px;top:91.68px;font-size:8.0px;color:#000;transform:scaleX(0.906);">Combo View</div>
<div class="b" style="left:0px;top:100px;width:160px;height:290px;background:#f0f0f0"></div>
<div class="b" style="left:1px;top:102px;width:30px;height:13.5px;background:#f0f0f0;border:1px solid #d9d9d9;border-bottom:none;box-sizing:border-box"></div>
<div class="b" style="left:31px;top:101.8px;width:44px;height:13.799999999999997px;background:#fff"></div>
<div class="t" style="left:6.90px;top:104.83px;font-size:8.0px;color:#000;transform:scaleX(0.803);">Model</div>
<div class="t" style="left:51.25px;top:104.83px;font-size:8.0px;color:#000;transform:scaleX(0.819);">Tasks</div>
<div class="b" style="left:2px;top:117px;width:146px;height:270px;background:linear-gradient(#a9a9c3,#8a8aae 25%,#6a6a96 45%,#42426f 68%,#38386a)"></div>
<div class="b" style="left:147.5px;top:116px;width:10.5px;height:271px;background:#f0f0f0"></div>
<div class="b" style="left:147.5px;top:127px;width:10.5px;height:90.5px;background:#cdcdcd"></div>
<div class="b" style="left:158px;top:100px;width:1px;height:290px;background:#d9d9d9"></div>
<div class="b" style="left:53px;top:128px;width:44px;height:12px;background:#e1e1e1"></div>
<div class="t" style="left:67.00px;top:130.43px;font-size:8.0px;color:#000;transform:scaleX(0.758);">Close</div>
<div class="b" style="left:7px;top:151px;width:136px;height:91px;background:#d6ddf5;border-radius:3px 3px 0 0"></div>
<div class="b" style="left:7px;top:151px;width:136px;height:14.599999999999994px;background:linear-gradient(90deg,#fff,#c9d5f5);border-radius:3px 3px 0 0;border-bottom:1px solid #fff;box-sizing:border-box"></div>
<div class="t" style="left:21.25px;top:154.66px;font-size:8.2px;color:#1e4fc4;font-weight:bold;transform:scaleX(0.821);">Solver messages</div>
<div class="b" style="left:105px;top:174.5px;width:29px;height:7.0px;background:#fff"></div>
<div class="t" style="left:15.00px;top:174.18px;font-size:8.0px;color:#000;transform:scaleX(0.815);">Under-constrained sketch with</div>
<div class="t" style="left:105.25px;top:174.18px;font-size:8.0px;color:#0000ff;transform:scaleX(0.808);text-decoration:underline;">3 degrees</div>
<div class="t" style="left:15.00px;top:182.68px;font-size:8.0px;color:#000;transform:scaleX(0.834);">of freedom.</div>
<div class="b" style="left:15px;top:194.5px;width:44px;height:7.5px;background:#d0dcd0"></div>
<div class="t" style="left:15.00px;top:194.53px;font-size:8.0px;color:#20a020;transform:scaleX(0.806);">Solved in 0 sec</div>
<div class="b" style="left:15px;top:207px;width:8px;height:8px;background:#fff;border:1px solid #6e6e6e;box-sizing:border-box"></div>
<div class="t" style="left:26.25px;top:208.33px;font-size:8.0px;color:#000;transform:scaleX(0.816);">Auto remove redundants</div>
<div class="b" style="left:15px;top:223px;width:8px;height:8px;background:#fff;border:1px solid #6e6e6e;box-sizing:border-box"></div>
<div class="t" style="left:26.00px;top:223.33px;font-size:8.0px;color:#000;transform:scaleX(0.817);">Auto update</div>
<div class="b" style="left:77px;top:221px;width:57px;height:13px;background:#e1e1e1;border:1px solid #adadad;box-sizing:border-box"></div>
<div class="t" style="left:94.60px;top:223.33px;font-size:8.0px;color:#000;transform:scaleX(0.829);">Update</div>
<div class="b" style="left:7px;top:247.5px;width:136px;height:139.5px;background:#d6ddf5;border-radius:3px 3px 0 0"></div>
<div class="b" style="left:7px;top:247.5px;width:136px;height:14.699999999999989px;background:linear-gradient(90deg,#fff,#c9d5f5);border-radius:3px 3px 0 0;border-bottom:1px solid #fff;box-sizing:border-box"></div>
<div class="t" style="left:21.25px;top:250.76px;font-size:8.2px;color:#1e4fc4;font-weight:bold;transform:scaleX(0.823);">Edit controls</div>
<div class="b" style="left:15px;top:271px;width:8px;height:8px;background:#fff;border:1px solid #6e6e6e;box-sizing:border-box"></div>
<div class="t" style="left:26.00px;top:271.93px;font-size:8.0px;color:#000;transform:scaleX(0.815);">Show grid</div>
<div class="b" style="left:15px;top:302.25px;width:8px;height:8.0px;background:#fff;border:1px solid #6e6e6e;box-sizing:border-box"></div>
<div class="t" style="left:26.00px;top:302.93px;font-size:8.0px;color:#000;transform:scaleX(0.800);">Grid snap</div>
<div class="b" style="left:15px;top:317px;width:8px;height:8px;background:#fff;border:1px solid #6e6e6e;box-sizing:border-box"></div>
<div class="t" style="left:26.00px;top:317.43px;font-size:8.0px;color:#000;transform:scaleX(0.821);">Auto constraints</div>
<div class="b" style="left:15px;top:331.25px;width:8px;height:8.0px;background:#fff;border:1px solid #6e6e6e;box-sizing:border-box"></div>
<div class="t" style="left:26.00px;top:331.68px;font-size:8.0px;color:#000;transform:scaleX(0.823);">Avoid redundant auto constraints</div>
<div class="t" style="left:15.00px;top:287.68px;font-size:8.0px;color:#000;transform:scaleX(0.796);">Grid size:</div>
<div class="b" style="left:76.5px;top:284.5px;width:57.5px;height:13.0px;background:#fff;border:1px solid #adadad;box-sizing:border-box"></div>
<div class="t" style="left:78.75px;top:287.93px;font-size:8.0px;color:#000;transform:scaleX(0.822);">10.00 mm</div>
<div class="t" style="left:15.00px;top:345.18px;font-size:8.0px;color:#000;transform:scaleX(0.821);">Rendering order (global):</div>
<div class="b" style="left:15px;top:356px;width:119.6px;height:31px;background:#fff;border:1px solid #a0a0b0;border-bottom:none;box-sizing:border-box"></div>
<div class="t" style="left:18.00px;top:359.93px;font-size:8.0px;color:#000;transform:scaleX(0.903);">Normal Geometry</div>
<div class="t" style="left:18.00px;top:371.13px;font-size:8.0px;color:#000;transform:scaleX(0.898);">Construction Geometry</div>
<svg class="b" style="left:163px;top:88px" width="605" height="288" viewBox="163 88 605 288"><defs><linearGradient id="vbg" x1="0" y1="0" x2="0" y2="1"><stop offset="0" stop-color="#333365"/><stop offset="1" stop-color="#ababc1"/></linearGradient></defs><rect x="163" y="88" width="605" height="288" fill="url(#vbg)"/><line x1="215.5" y1="88" x2="215.5" y2="376" stroke="#9898ba" stroke-width="1" stroke-dasharray="1.6 1.55"/><line x1="267.5" y1="88" x2="267.5" y2="376" stroke="#9898ba" stroke-width="1" stroke-dasharray="1.6 1.55"/><line x1="320.5" y1="88" x2="320.5" y2="376" stroke="#9898ba" stroke-width="1" stroke-dasharray="1.6 1.55"/><line x1="372.5" y1="88" x2="372.5" y2="376" stroke="#9898ba" stroke-width="1" stroke-dasharray="1.6 1.55"/><line x1="425.5" y1="88" x2="425.5" y2="376" stroke="#9898ba" stroke-width="1" stroke-dasharray="1.6 1.55"/><line x1="477.5" y1="88" x2="477.5" y2="376" stroke="#9898ba" stroke-width="1" stroke-dasharray="1.6 1.55"/><line x1="530.5" y1="88" x2="530.5" y2="376" stroke="#9898ba" stroke-width="1" stroke-dasharray="1.6 1.55"/><line x1="582.5" y1="88" x2="582.5" y2="376" stroke="#9898ba" stroke-width="1" stroke-dasharray="1.6 1.55"/><line x1="687.5" y1="88" x2="687.5" y2="376" stroke="#9898ba" stroke-width="1" stroke-dasharray="1.6 1.55"/><line x1="740.5" y1="88" x2="740.5" y2="376" stroke="#9898ba" stroke-width="1" stroke-dasharray="1.6 1.55"/><line x1="163" y1="95.5" x2="768" y2="95.5" stroke="#9898ba" stroke-width="1" stroke-dasharray="1.6 1.55"/><line x1="163" y1="147.5" x2="768" y2="147.5" stroke="#9898ba" stroke-width="1" stroke-dasharray="1.6 1.55"/><line x1="163" y1="200.5" x2="768" y2="200.5" stroke="#9898ba" stroke-width="1" stroke-dasharray="1.6 1.55"/><line x1="163" y1="305.5" x2="768" y2="305.5" stroke="#9898ba" stroke-width="1" stroke-dasharray="1.6 1.55"/><line x1="163" y1="357.5" x2="768" y2="357.5" stroke="#9898ba" stroke-width="1" stroke-dasharray="1.6 1.55"/><line x1="163" y1="252.5" x2="768" y2="252.5" stroke="#22aa30" stroke-width="1.2"/><line x1="163" y1="252.5" x2="768" y2="252.5" stroke="#a8d0a8" stroke-opacity="0.7" stroke-width="1.2" stroke-dasharray="1.4 1.6"/><line x1="635.4" y1="88" x2="635.4" y2="376" stroke="#60c888" stroke-width="1"/><circle cx="635.4" cy="252.7" r="44.4" fill="none" stroke="#7ad890" stroke-width="1.1"/><line x1="602.4" y1="279.5" x2="705.5" y2="195.4" stroke="#e03828" stroke-width="1.1"/><circle cx="668" cy="225.9" r="1.6" fill="#f03020"/><circle cx="602.5" cy="279.45" r="1.6" fill="#f03020"/><text x="0" y="0" font-family="Liberation Sans" font-size="6.6" fill="#c03434" stroke="#c03434" stroke-width="0.1" transform="translate(708.6,195.6) rotate(-40)">ø17 mm</text><circle cx="296.8" cy="234.5" r="39.4" fill="none" stroke="#ffffff" stroke-width="1.2"/><rect x="287.9" y="224.9" width="19.2" height="17.9" fill="none" stroke="#ff8628" stroke-width="1.9"/><rect x="284.5" y="248.2" width="25.6" height="11.3" fill="none" stroke="#ff8628" stroke-width="1.9"/><circle cx="296.6" cy="234.4" r="1.4" fill="#20b020"/><polygon points="734.6,95.4 739.4,90.7 744.2,95.4" fill="#9a9ab8"/><polygon points="734.6,138.2 739.4,143 744.2,138.2" fill="#9a9ab8"/><polygon points="717.6,112.4 712.4,116.8 717.6,121.2" fill="#9a9ab8"/><polygon points="760,112.4 765.3,116.8 760,121.2" fill="#9a9ab8"/><path d="M719.5 104 Q722 96.5 730 93.5" fill="none" stroke="#9a9ab8" stroke-width="2.6"/><polygon points="717.6,104.6 723.6,103 719.2,100" fill="#9a9ab8"/><path d="M759 104 Q756.5 96.5 748.5 93.5" fill="none" stroke="#9a9ab8" stroke-width="2.6"/><polygon points="760.9,104.6 754.9,103 759.3,100" fill="#9a9ab8"/><rect x="726" y="104" width="26" height="26" rx="5.5" fill="#a6a6c0" stroke="#8a8aa8" stroke-width="0.6"/><rect x="727.6" y="105.6" width="22.8" height="22.8" rx="4" fill="#c4c4d6"/><rect x="729" y="107" width="20" height="20" rx="1.5" fill="#d2d2e0"/><line x1="729" y1="107" x2="729" y2="126.8" stroke="#70e070" stroke-width="0.7"/><line x1="729" y1="126.8" x2="748.6" y2="126.8" stroke="#f08080" stroke-width="0.7"/><line x1="729" y1="126.8" x2="726.4" y2="131.6" stroke="#2030e0" stroke-width="0.9"/><text x="739.4" y="119.4" font-family="Liberation Sans" font-size="6" font-weight="bold" fill="#000" stroke="#000" stroke-width="0.15" text-anchor="middle" letter-spacing="-0.6">TOP</text><rect x="748" y="134.6" width="8" height="5.6" rx="1" fill="#8e8eaa"/><ellipse cx="752" cy="134.6" rx="4" ry="1.3" fill="#a8a8c0"/><polygon points="758.4,136.4 761.6,136.4 760,138" fill="#6a6a8a"/><line x1="753.5" y1="361.4" x2="753.5" y2="351" stroke="#20b020" stroke-width="1.2"/><polygon points="751.8,353 753.5,350 755.2,353" fill="#20b020"/><line x1="753.5" y1="361.4" x2="762.6" y2="361.4" stroke="#d02020" stroke-width="1.1"/><polygon points="761,359.8 764,361.4 761,363" fill="#d02020"/><circle cx="753.5" cy="361.4" r="1" fill="#2020d0"/><text x="755.4" y="351.6" font-family="Liberation Sans" font-size="4" fill="#f0f0f0">Y</text><text x="755.4" y="360" font-family="Liberation Sans" font-size="4" fill="#f0f0f0">Z</text><text x="764.6" y="362.2" font-family="Liberation Sans" font-size="4" fill="#e0e0e0">X</text></svg>
<div class="b" style="left:164.5px;top:376px;width:66.5px;height:13px;background:#f0f0f0;border:1px solid #dadada;border-top:none;box-sizing:border-box"></div>
<div class="b" style="left:231px;top:376px;width:81px;height:13px;background:#fff"></div>
<div class="t" style="left:182.50px;top:378.93px;font-size:8.0px;color:#000;transform:scaleX(0.813);">Start page</div>
<div class="t" style="left:251.75px;top:379.68px;font-size:8.0px;color:#000;transform:scaleX(0.835);">Unnamed : 1*</div>
<div class="t" style="left:3.75px;top:395.63px;font-size:8.0px;color:#000;transform:scaleX(0.898);">(Shift+O) Fix a point onto an object</div>
<div class="t" style="left:661.90px;top:395.53px;font-size:8.0px;color:#000;transform:scaleX(0.858);">Gestur</div>
<div class="t" style="left:695.75px;top:395.53px;font-size:8.0px;color:#000;transform:scaleX(0.830);">115.25 mm x 54.88 mm</div>
<svg class="b" style="left:0;top:0;pointer-events:none" width="768" height="406" viewBox="0 0 768 406"><g transform="translate(1,2.2) scale(1.0)"><path d="M0 0 L5 0 L5 1.8 L1.9 1.8 L1.9 3.6 L4.2 3.6 L4.2 5.3 L1.9 5.3 L1.9 8.8 L0 8.8 Z" fill="#d01018"/><circle cx="5.8" cy="5.8" r="2.5" fill="none" stroke="#3a68b8" stroke-width="1.6" stroke-dasharray="1 0.6"/><circle cx="5.8" cy="5.8" r="1.9" fill="none" stroke="#3a68b8" stroke-width="0.9"/></g><line x1="694.5" y1="6.5" x2="700.8" y2="6.5" stroke="#222" stroke-width="0.7"/><rect x="722.4" y="4.6" width="4.6" height="5" fill="none" stroke="#222" stroke-width="0.7"/><path d="M723.6 4.6 L723.6 3.3 L728 3.3 L728 8.2 L727 8.2" fill="none" stroke="#222" stroke-width="0.7"/><path d="M750.2 3.2 L757 10 M757 3.2 L750.2 10" stroke="#222" stroke-width="0.7"/><rect x="152.2" y="93.2" width="3.8" height="3.6" fill="none" stroke="#333" stroke-width="0.8"/><path d="M153.4 93 L153.4 91.8 L157.2 91.8 L157.2 95.6 L156.2 95.6" fill="none" stroke="#333" stroke-width="0.8"/><line x1="40.2" y1="104.4" x2="47" y2="110.2" stroke="#2a5090" stroke-width="2.6"/><line x1="47" y1="110.2" x2="48.3" y2="111.3" stroke="#333" stroke-width="1.2"/><path d="M150.6 124 L152.8 121.8 L155 124" fill="none" stroke="#555" stroke-width="0.9"/><path d="M150.6 381.2 L152.8 383.4 L155 381.2" fill="none" stroke="#555" stroke-width="0.9"/><rect x="11.2" y="154.0" width="7.5" height="8.8" fill="#ececec" stroke="#c8c8c8" stroke-width="0.5"/><circle cx="17.8" cy="155.6" r="1.9" fill="#f0f020"/><circle cx="136.1" cy="158.1" r="4.3" fill="#fff" stroke="#c8d0ec" stroke-width="0.4"/><path d="M134.3 157.39999999999998 L136.1 155.79999999999998 L137.9 157.39999999999998 M134.3 160.1 L136.1 158.5 L137.9 160.1" fill="none" stroke="#2f60c0" stroke-width="0.9"/><rect x="11.2" y="250.3" width="7.5" height="8.8" fill="#ececec" stroke="#c8c8c8" stroke-width="0.5"/><circle cx="17.8" cy="251.9" r="1.9" fill="#f0f020"/><circle cx="136.1" cy="254.4" r="4.3" fill="#fff" stroke="#c8d0ec" stroke-width="0.4"/><path d="M134.3 253.7 L136.1 252.1 L137.9 253.7 M134.3 256.4 L136.1 254.8 L137.9 256.4" fill="none" stroke="#2f60c0" stroke-width="0.9"/><path d="M16.6 275.2 L18.4 276.9 L21.6 273.6" fill="none" stroke="#222" stroke-width="0.8"/><path d="M16.6 306.45 L18.4 308.15 L21.6 304.85" fill="none" stroke="#222" stroke-width="0.8"/><path d="M16.6 321.2 L18.4 322.9 L21.6 319.6" fill="none" stroke="#222" stroke-width="0.8"/><path d="M16.6 335.45 L18.4 337.15 L21.6 333.85" fill="none" stroke="#222" stroke-width="0.8"/><rect x="124.6" y="285.2" width="9" height="11.6" fill="#f0f0f0"/><line x1="124.6" y1="291" x2="133.6" y2="291" stroke="#dcdcdc" stroke-width="0.6"/><polygon points="127.4,289 129.2,287.2 131,289" fill="#000"/><polygon points="127.4,292.8 129.2,294.6 131,292.8" fill="#000"/><g transform="translate(170.8,377.4) scale(0.98)"><path d="M0 0 L5 0 L5 1.8 L1.9 1.8 L1.9 3.6 L4.2 3.6 L4.2 5.3 L1.9 5.3 L1.9 8.8 L0 8.8 Z" fill="#d01018"/><circle cx="5.8" cy="5.8" r="2.5" fill="none" stroke="#3a68b8" stroke-width="1.6" stroke-dasharray="1 0.6"/><circle cx="5.8" cy="5.8" r="1.9" fill="none" stroke="#3a68b8" stroke-width="0.9"/></g><g transform="translate(240.2,377.6) scale(0.98)"><path d="M0 0 L5 0 L5 1.8 L1.9 1.8 L1.9 3.6 L4.2 3.6 L4.2 5.3 L1.9 5.3 L1.9 8.8 L0 8.8 Z" fill="#d01018"/><circle cx="5.8" cy="5.8" r="2.5" fill="none" stroke="#3a68b8" stroke-width="1.6" stroke-dasharray="1 0.6"/><circle cx="5.8" cy="5.8" r="1.9" fill="none" stroke="#3a68b8" stroke-width="0.9"/></g><rect x="215.6" y="378.2" width="8.2" height="8.2" rx="1.2" fill="#c4c4c4"/><path d="M217.8 380.4 L221.6 384.2 M221.6 380.4 L217.8 384.2" stroke="#f4f4f4" stroke-width="1.1"/><rect x="296.1" y="378.7" width="8.4" height="8.3" rx="1.2" fill="#e9653c"/><path d="M298.3 380.9 L302.3 384.8 M302.3 380.9 L298.3 384.8" stroke="#fff" stroke-width="1.2"/><path d="M652.6 397.8 Q653.6 395.2 658.4 395.8 M651.8 401.6 Q656 403.4 659 400.6" fill="none" stroke="#444" stroke-width="0.8"/><circle cx="658.6" cy="395.8" r="1.3" fill="#222"/><circle cx="652.4" cy="401.8" r="1.3" fill="#222"/><polygon points="684,398 687.8,398 685.9,400" fill="#000"/><line x1="693.2" y1="391" x2="693.2" y2="406" stroke="#dcdcdc" stroke-width="0.8"/></svg>
<div class="t" style="left:261.00px;top:33.07px;font-size:7.6px;color:#000;transform:scaleX(0.834);">Sketcher</div>
<div class="t" style="left:18.00px;top:382.33px;font-size:8.0px;color:#000;transform:scaleX(0.930);clip-path:inset(0 0 2.6px 0);">External Geometry</div>
<div class="b" style="left:433px;top:69.4px;width:120px;height:11.599999999999994px;background:#fff;border:1px solid #a0a0a0;box-sizing:border-box;box-shadow:1px 1px 1px rgba(0,0,0,.2)"></div>
<div class="t" style="left:437.00px;top:72.30px;font-size:7.8px;color:#575757;transform:scaleX(0.919);">Fix a point onto an object (Shift+O)</div>
</body></html>
